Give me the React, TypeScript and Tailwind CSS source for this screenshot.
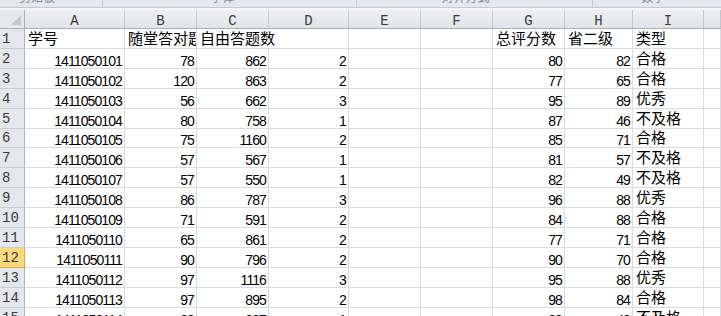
import React from "react";

type Row = {
  id: string;
  b: string;
  c: string;
  d: string;
  g: string;
  h: string;
  type: string;
};

const ROWS: Row[] = [
  { id: "1411050101", b: "78", c: "862", d: "2", g: "80", h: "82", type: "合格" },
  { id: "1411050102", b: "120", c: "863", d: "2", g: "77", h: "65", type: "合格" },
  { id: "1411050103", b: "56", c: "662", d: "3", g: "95", h: "89", type: "优秀" },
  { id: "1411050104", b: "80", c: "758", d: "1", g: "87", h: "46", type: "不及格" },
  { id: "1411050105", b: "75", c: "1160", d: "2", g: "85", h: "71", type: "合格" },
  { id: "1411050106", b: "57", c: "567", d: "1", g: "81", h: "57", type: "不及格" },
  { id: "1411050107", b: "57", c: "550", d: "1", g: "82", h: "49", type: "不及格" },
  { id: "1411050108", b: "86", c: "787", d: "3", g: "96", h: "88", type: "优秀" },
  { id: "1411050109", b: "71", c: "591", d: "2", g: "84", h: "88", type: "合格" },
  { id: "1411050110", b: "65", c: "861", d: "2", g: "77", h: "71", type: "合格" },
  { id: "1411050111", b: "90", c: "796", d: "2", g: "90", h: "70", type: "合格" },
  { id: "1411050112", b: "97", c: "1116", d: "3", g: "95", h: "88", type: "优秀" },
  { id: "1411050113", b: "97", c: "895", d: "2", g: "98", h: "84", type: "合格" },
  { id: "1411050114", b: "88", c: "837", d: "1", g: "88", h: "48", type: "不及格" },
];

const COLS = ["A", "B", "C", "D", "E", "F", "G", "H", "I", ""];

const GRID = "grid grid-cols-[25px_100px_72px_72px_80px_72px_72px_72px_68px_71px_1fr]";

const num = "border-r border-b border-[#dadcdd] flex items-end justify-end pr-[2px] text-[14px] leading-none tracking-[-0.9px] text-black whitespace-nowrap";
const cjk = "border-r border-b border-[#dadcdd] flex items-end pl-[3px] pb-[2px] text-[15px] leading-none text-black whitespace-nowrap";
const empty = "border-r border-b border-[#dadcdd]";

function RowHeader({ n, active }: { n: number; active?: boolean }) {
  return (
    <div
      className={
        active
          ? "border-b border-r border-[#e2a33c] bg-[#f9d97c] flex items-center pl-[2px] text-[14px] leading-none text-[#3b3b3b] font-['Liberation_Mono',monospace]"
          : "border-b border-r border-[#a9b1bc] border-b-[#c9ced5] bg-[#e4e7ec] flex items-center pl-[2px] text-[14px] leading-none text-[#3b3b3b] font-['Liberation_Mono',monospace]"
      }
    >
      {n}
    </div>
  );
}

export default function App() {
  return (
    <div className="w-[721px] h-[316px] overflow-hidden bg-white font-['Liberation_Sans','Noto_Sans_CJK_SC',sans-serif]">
      {/* ribbon bottom edge, group labels cut off */}
      <div className="h-[8px] bg-[#e3e8ee] border-b border-[#c3c9d1] flex overflow-hidden text-[12px] leading-none text-[#7e8a9a] font-['Noto_Sans_CJK_SC',sans-serif]">
        <div className="w-[103px] border-r border-[#c3c9d1] flex justify-center pr-[28px]">
          <span className="-mt-[9px]">剪贴板</span>
        </div>
        <div className="w-[254px] border-r border-[#c3c9d1] flex justify-center pr-[14px]">
          <span className="-mt-[9px]">字体</span>
        </div>
        <div className="w-[236px] border-r border-[#c3c9d1] flex justify-center pr-[18px]">
          <span className="-mt-[9px]">对齐方式</span>
        </div>
        <div className="flex-1 flex justify-center pr-[8px]">
          <span className="-mt-[9px]">数字</span>
        </div>
      </div>
      <div className="h-[2px] bg-[#f3f5f8]" />

      {/* column headers */}
      <div className={GRID}>
        <div className="h-[19px] bg-[#e4e7ec] border-r border-b border-[#a9b1bc] flex items-end justify-end p-[3px]">
          <svg width="10" height="10" viewBox="0 0 10 10">
            <polygon points="10,0 10,10 0,10" fill="#c3c8cf" />
          </svg>
        </div>
        {COLS.map((c, i) => (
          <div
            key={i}
            className="h-[19px] bg-gradient-to-b from-[#eef0f3] to-[#e1e4e9] border-r border-b border-[#c1c7cf] border-b-[#a9b1bc] flex items-center justify-center pt-[3px] text-[14px] leading-none text-[#3b3b3b] font-['Liberation_Mono',monospace]"
          >
            {c}
          </div>
        ))}
      </div>

      {/* row 1: headings */}
      <div className={GRID + " h-[20px]"}>
        <RowHeader n={1} />
        <div className={cjk}>学号</div>
        <div className={cjk + " overflow-hidden"}>随堂答对题</div>
        <div className={cjk + " border-r-0 overflow-visible"}>自由答题数</div>
        <div className={empty} />
        <div className={empty} />
        <div className={empty} />
        <div className={cjk}>总评分数</div>
        <div className={cjk}>省二级</div>
        <div className={cjk}>类型</div>
        <div className={empty} />
      </div>

      {ROWS.map((r, i) => (
        <div key={r.id} className={GRID + (i + 2 === 6 ? " h-[19px]" : " h-[20px]")}>
          <RowHeader n={i + 2} active={i + 2 === 12} />
          <div className={num}>{r.id}</div>
          <div className={num}>{r.b}</div>
          <div className={num}>{r.c}</div>
          <div className={num}>{r.d}</div>
          <div className={empty} />
          <div className={empty} />
          <div className={num}>{r.g}</div>
          <div className={num}>{r.h}</div>
          <div className={cjk}>{r.type}</div>
          <div className={empty} />
        </div>
      ))}
    </div>
  );
}
